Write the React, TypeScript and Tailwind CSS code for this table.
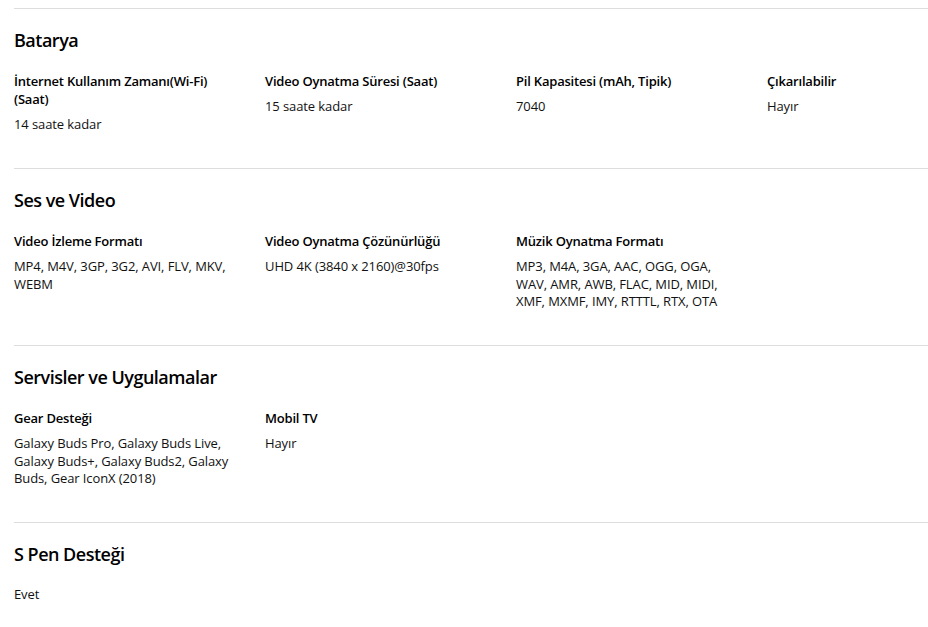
type Spec = { label?: string; value: string };
type Section = { title: string; specs: Spec[] };

const sections: Section[] = [
  {
    title: 'Batarya',
    specs: [
      { label: 'İnternet Kullanım Zamanı(Wi-Fi) (Saat)', value: '14 saate kadar' },
      { label: 'Video Oynatma Süresi (Saat)', value: '15 saate kadar' },
      { label: 'Pil Kapasitesi (mAh, Tipik)', value: '7040' },
      { label: 'Çıkarılabilir', value: 'Hayır' },
    ],
  },
  {
    title: 'Ses ve Video',
    specs: [
      { label: 'Video İzleme Formatı', value: 'MP4, M4V, 3GP, 3G2, AVI, FLV, MKV, WEBM' },
      { label: 'Video Oynatma Çözünürlüğü', value: 'UHD 4K (3840 x 2160)@30fps' },
      {
        label: 'Müzik Oynatma Formatı',
        value: 'MP3, M4A, 3GA, AAC, OGG, OGA, WAV, AMR, AWB, FLAC, MID, MIDI, XMF, MXMF, IMY, RTTTL, RTX, OTA',
      },
    ],
  },
  {
    title: 'Servisler ve Uygulamalar',
    specs: [
      {
        label: 'Gear Desteği',
        value: 'Galaxy Buds Pro, Galaxy Buds Live, Galaxy Buds+, Galaxy Buds2, Galaxy Buds, Gear IconX (2018)',
      },
      { label: 'Mobil TV', value: 'Hayır' },
    ],
  },
  {
    title: 'S Pen Desteği',
    specs: [{ value: 'Evet' }],
  },
];

export default function App() {
  return (
    <div className="w-[928px] h-[627px] overflow-hidden bg-white pl-[14px] pt-[8px] text-black font-['Open_Sans',sans-serif]">
      {sections.map(sec => (
        <section key={sec.title} className="border-t border-[#dddddd] pt-[19px] pb-[34.5px]">
          <h2 className="text-[18px] leading-[24px] font-semibold tracking-[-0.5px] mb-[20px]">{sec.title}</h2>
          <div className="grid grid-cols-[217px_217px_217px_217px] gap-x-[34px]">
            {sec.specs.map((s, i) => (
              <div key={i} className="flex flex-col gap-[8px]">
                {s.label && (
                  <p className="text-[13px] leading-[18px] font-semibold tracking-[-0.2px]">{s.label}</p>
                )}
                <p className="text-[13px] leading-[17.5px] tracking-[-0.1px] text-[#111]">{s.value}</p>
              </div>
            ))}
          </div>
        </section>
      ))}
    </div>
  );
}
